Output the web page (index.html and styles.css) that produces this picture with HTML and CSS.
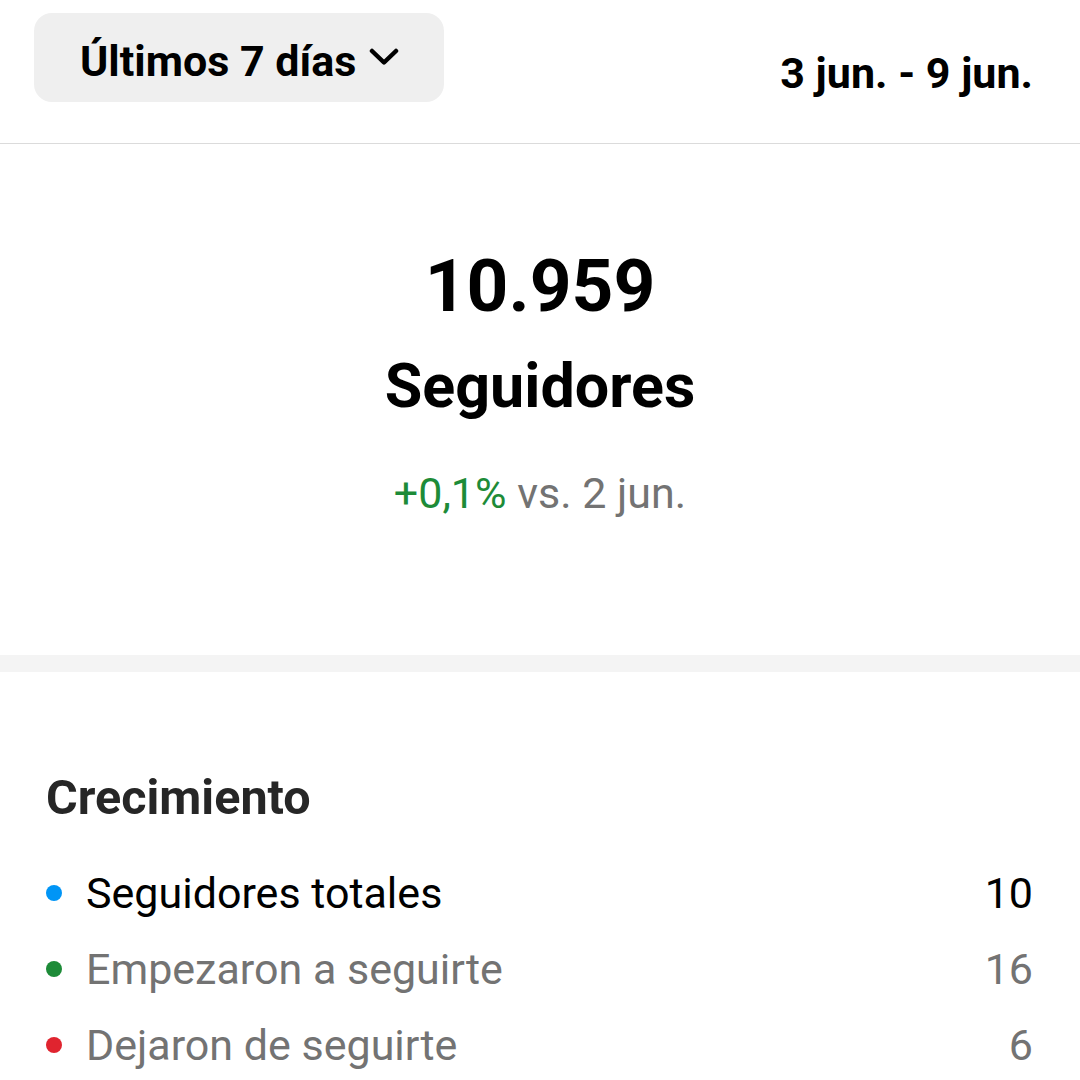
FILE: index.html
```html
<!DOCTYPE html>
<html lang="es">
<head>
  <meta charset="UTF-8">
  <meta name="viewport" content="width=device-width, initial-scale=1.0">
  <title>Seguidores</title>
  <link rel="stylesheet" href="styles.css">
</head>
<body>

  <div class="page">
    <div class="top-bar">
      <button class="range-btn">
        Últimos 7 días
        <svg class="chevron" width="30" height="20" viewBox="0 0 30 20">
          <path d="M3 4 L15 15.5 L27 4" fill="none" stroke="#000" stroke-width="4.5" stroke-linecap="round" stroke-linejoin="round"/>
        </svg>
      </button>
      <div class="date-range">3 jun. - 9 jun.</div>
    </div>

    <div class="summary">
      <div class="total">10.959</div>
      <div class="total-label">Seguidores</div>
      <div class="change"><span class="up">+0,1%</span> vs. 2 jun.</div>
    </div>

    <div class="band"></div>

    <div class="growth">
      <h2>Crecimiento</h2>
      <ul class="growth-list">
        <li class="main"><span class="dot blue"></span><span class="label">Seguidores totales</span><span class="value">10</span></li>
        <li><span class="dot green"></span><span class="label">Empezaron a seguirte</span><span class="value">16</span></li>
        <li><span class="dot red"></span><span class="label">Dejaron de seguirte</span><span class="value">6</span></li>
      </ul>
    </div>
  </div>

</body>
</html>
```

FILE: styles.css
```css
body {
  margin: 0;
  padding: 0;
  font-family: Roboto, "Liberation Sans", sans-serif;
  background: #ffffff;
  color: #000;
}

.page {
  width: 1080px;
  height: 1080px;
  overflow: hidden;
}

/* header with period picker */
.top-bar {
  display: flex;
  justify-content: space-between;
  align-items: flex-start;
  padding: 13px 47px 0 34px;
  height: 130px;
  border-bottom: 1px solid #dbdbdb;
}

.range-btn {
  box-sizing: border-box;
  display: flex;
  align-items: center;
  gap: 13px;
  width: 410px;
  height: 89px;
  padding: 6px 0 0 46px;
  border: none;
  border-radius: 18px;
  background: #efefef;
  font-family: inherit;
  font-size: 43px;
  font-weight: bold;
  color: #000;
}

.chevron {
  margin-bottom: 7px;
}

.date-range {
  margin-top: 35px;
  font-size: 43px;
  font-weight: bold;
  line-height: 50px;
}

/* big number */
.summary {
  display: flex;
  flex-direction: column;
  align-items: center;
  height: 511px;
}

.total {
  margin-top: 97px;
  font-size: 73px;
  font-weight: bold;
  line-height: 90px;
}

.total-label {
  margin-top: 20px;
  font-size: 61px;
  font-weight: bold;
  line-height: 70px;
}

.change {
  margin-top: 47px;
  font-size: 43px;
  line-height: 50px;
  color: #737373;
}

.change .up {
  color: #1d8b38;
}

.band {
  height: 17px;
  background: #f4f4f4;
}

/* growth list */
.growth {
  padding: 0 47px 0 46px;
}

.growth h2 {
  margin: 98px 0 29px;
  font-size: 48.5px;
  font-weight: bold;
  color: #262626;
  line-height: 56px;
}

.growth-list {
  list-style: none;
  margin: 0;
  padding: 0;
}

.growth-list li {
  display: flex;
  align-items: center;
  height: 76px;
  font-size: 43px;
  color: #737373;
}

.growth-list li.main {
  color: #000;
}

.dot {
  width: 16px;
  height: 16px;
  border-radius: 50%;
  margin-right: 24px;
}

.dot.blue { background: #0095f6; }
.dot.green { background: #1d8b38; }
.dot.red { background: #e0242f; }

.label {
  flex: 1;
}
```
